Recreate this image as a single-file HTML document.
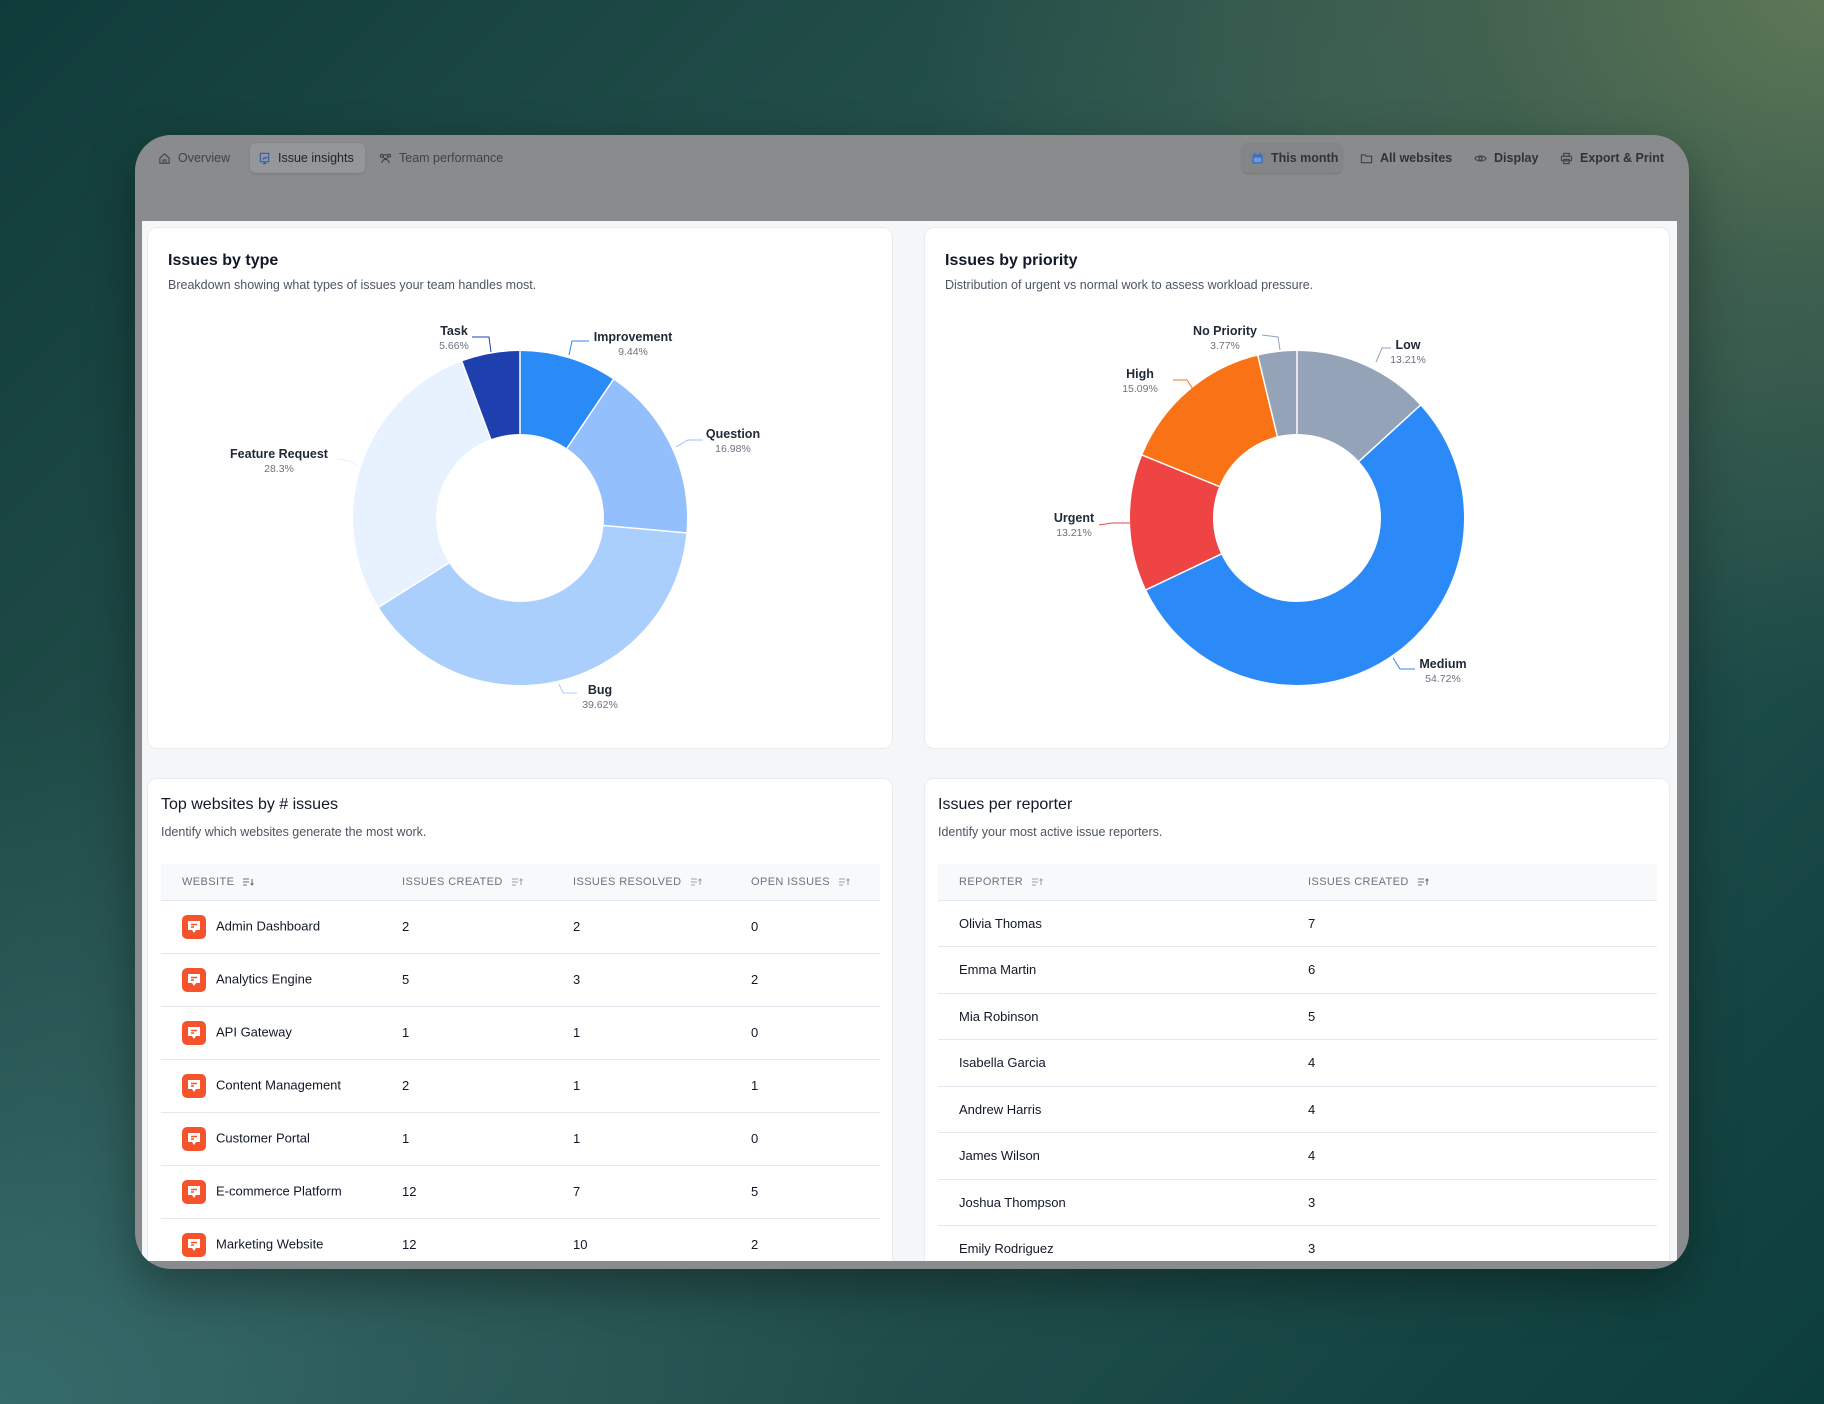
<!DOCTYPE html>
<html><head><meta charset="utf-8"><style>
*{margin:0;padding:0;box-sizing:border-box}
body{width:1824px;height:1404px;overflow:hidden;font-family:"Liberation Sans",sans-serif;position:relative;
background:radial-gradient(ellipse 900px 700px at 1824px 0px,#5d7756 0%,rgba(80,105,80,0.6) 40%,rgba(0,0,0,0) 100%),
radial-gradient(ellipse 900px 700px at 0px 1404px,#356b6b 0%,rgba(50,100,100,0.5) 50%,rgba(0,0,0,0) 100%),
linear-gradient(135deg,#0f3b3a 0%,#2b5650 45%,#1f4d4a 70%,#0c3e3c 100%);}
.win{position:absolute;left:135px;top:135px;width:1554px;height:1134px;border-radius:36px;background:#8a8b8c;overflow:hidden;box-shadow:0 20px 50px rgba(0,0,0,.35)}
.tab{position:absolute;top:16px;font-size:12.5px;color:#3f4348;display:flex;align-items:center;gap:7px;height:14px;line-height:14px}
.pill{position:absolute;top:8px;height:30px;border-radius:6px;background:#959698;box-shadow:0 1px 2px rgba(0,0,0,.15)}
.content{position:absolute;left:7px;top:86px;width:1535px;height:1040px;background:#f4f6f8;overflow:hidden}
.card{position:absolute;background:#fff;border-radius:10px;border:1px solid #e8ecf0}
.title{position:absolute;font-size:16px;font-weight:bold;color:#111827}
.sub{position:absolute;font-size:12.5px;color:#4b5563}
.lbl{position:absolute;text-align:center;transform:translateX(-50%);white-space:nowrap}
.lbl b{display:block;font-size:12.5px;color:#1f2937}
.lbl i{display:block;font-style:normal;font-size:10.5px;color:#6b7280;margin-top:2px}
table{position:absolute;border-collapse:collapse;font-size:13px;color:#111827}
th{background:#f7f9fb;font-weight:normal;font-size:11px;letter-spacing:.4px;color:#6b7280;text-align:left;height:36px;border-bottom:1px solid #e2e8f0}
td{border-bottom:1px solid #e2e8f0}
.ic{display:inline-block;width:24px;height:24px;background:#f4532c;border-radius:5px;vertical-align:middle;margin-right:10px;position:relative}
.srt{display:inline-block;margin-left:8px;vertical-align:middle}
</style></head><body>
<div class="win">
 <div class="pill" style="left:115px;width:115px"></div>
 <div class="pill" style="left:1107px;width:100px;background:#838587"></div>
 <div class="tab" style="left:23px"><svg width="13" height="13" viewBox="0 0 14 14" fill="none" stroke="#3f4348" stroke-width="1.2"><path d="M2 6.5L7 2l5 4.5V12H2z"/><path d="M5.5 12V8.5h3V12"/></svg>Overview</div>
 <div class="tab" style="left:123px;color:#1f2329"><svg width="13" height="13" viewBox="0 0 14 14" fill="none" stroke="#2d5fb0" stroke-width="1.2"><rect x="2.5" y="1.5" width="9" height="9"/><path d="M5 12.5h4M7 10.5v2M5 8l2-2 1 1 2-2"/></svg>Issue insights</div>
 <div class="tab" style="left:244px"><svg width="13" height="13" viewBox="0 0 14 14" fill="none" stroke="#3f4348" stroke-width="1.2"><circle cx="7" cy="5" r="2.2"/><circle cx="3" cy="4" r="1.5"/><circle cx="11" cy="4" r="1.5"/><path d="M3 12c0-2.5 2-4 4-4s4 1.5 4 4"/></svg>Team performance</div>
 <div class="tab" style="left:1116px;font-weight:bold;color:#2f3338"><svg width="13" height="13" viewBox="0 0 14 14"><rect x="1.5" y="2.5" width="11" height="10" rx="1.5" fill="#3b6fc4"/><rect x="3" y="6" width="8" height="5" fill="#6f98d8"/><path d="M4 1v3M10 1v3" stroke="#3b6fc4" stroke-width="1.4"/></svg>This month</div>
 <div class="tab" style="left:1225px;font-weight:bold;color:#2f3338"><svg width="13" height="13" viewBox="0 0 14 14" fill="none" stroke="#3f4348" stroke-width="1.2"><path d="M1.5 3h4l1.2 1.5h5.8v7h-11z"/></svg>All websites</div>
 <div class="tab" style="left:1339px;font-weight:bold;color:#2f3338"><svg width="13" height="13" viewBox="0 0 14 14" fill="none" stroke="#3f4348" stroke-width="1.2"><path d="M1 7c2-3.5 10-3.5 12 0-2 3.5-10 3.5-12 0z"/><circle cx="7" cy="7" r="1.8"/></svg>Display</div>
 <div class="tab" style="left:1425px;font-weight:bold;color:#2f3338"><svg width="13" height="13" viewBox="0 0 14 14" fill="none" stroke="#3f4348" stroke-width="1.2"><rect x="4" y="1.5" width="6" height="3"/><rect x="1.5" y="4.5" width="11" height="5" rx="1"/><rect x="4" y="8" width="6" height="4.5"/></svg>Export &amp; Print</div>

 <div class="content">
  <div class="card" style="left:5px;top:6px;width:746px;height:522px">
   <div class="title" style="left:20px;top:24px">Issues by type</div>
   <div class="sub" style="left:20px;top:50px">Breakdown showing what types of issues your team handles most.</div>
  </div>
  <div class="card" style="left:782px;top:6px;width:746px;height:522px">
   <div class="title" style="left:20px;top:24px">Issues by priority</div>
   <div class="sub" style="left:20px;top:50px">Distribution of urgent vs normal work to assess workload pressure.</div>
  </div>
  <svg style="position:absolute;left:-142px;top:-221px" width="1824" height="1000">
   <g fill="none" stroke-width="83">
    <circle cx="520" cy="518" r="125.5" transform="rotate(-90 520 518)" stroke="#2a8af6" stroke-dasharray="74.44 800" stroke-dashoffset="0"/>
    <circle cx="520" cy="518" r="125.5" transform="rotate(-90 520 518)" stroke="#93c0fd" stroke-dasharray="133.9 800" stroke-dashoffset="-74.44"/>
    <circle cx="520" cy="518" r="125.5" transform="rotate(-90 520 518)" stroke="#aacffd" stroke-dasharray="312.42 800" stroke-dashoffset="-208.34"/>
    <circle cx="520" cy="518" r="125.5" transform="rotate(-90 520 518)" stroke="#e8f2fe" stroke-dasharray="223.16 800" stroke-dashoffset="-520.76"/>
    <circle cx="520" cy="518" r="125.5" transform="rotate(-90 520 518)" stroke="#1e40af" stroke-dasharray="44.63 800" stroke-dashoffset="-743.91"/>
    <circle cx="1297" cy="518" r="125.5" transform="rotate(-90 1297 518)" stroke="#94a3b8" stroke-dasharray="104.17 800" stroke-dashoffset="0"/>
    <circle cx="1297" cy="518" r="125.5" transform="rotate(-90 1297 518)" stroke="#2b8af7" stroke-dasharray="431.49 800" stroke-dashoffset="-104.17"/>
    <circle cx="1297" cy="518" r="125.5" transform="rotate(-90 1297 518)" stroke="#ef4444" stroke-dasharray="104.17 800" stroke-dashoffset="-535.66"/>
    <circle cx="1297" cy="518" r="125.5" transform="rotate(-90 1297 518)" stroke="#f97316" stroke-dasharray="118.99 800" stroke-dashoffset="-639.83"/>
    <circle cx="1297" cy="518" r="125.5" transform="rotate(-90 1297 518)" stroke="#94a3b8" stroke-dasharray="29.73 800" stroke-dashoffset="-758.82"/>
   </g>
   <g stroke="#fff" stroke-width="1.5">
    <line x1="520" y1="434" x2="520" y2="350" transform="rotate(0 520 518)"/>
    <line x1="520" y1="434" x2="520" y2="350" transform="rotate(33.98 520 518)"/>
    <line x1="520" y1="434" x2="520" y2="350" transform="rotate(95.11 520 518)"/>
    <line x1="520" y1="434" x2="520" y2="350" transform="rotate(237.74 520 518)"/>
    <line x1="520" y1="434" x2="520" y2="350" transform="rotate(339.62 520 518)"/>
    <line x1="1297" y1="434" x2="1297" y2="350" transform="rotate(0 1297 518)"/>
    <line x1="1297" y1="434" x2="1297" y2="350" transform="rotate(47.56 1297 518)"/>
    <line x1="1297" y1="434" x2="1297" y2="350" transform="rotate(244.55 1297 518)"/>
    <line x1="1297" y1="434" x2="1297" y2="350" transform="rotate(292.1 1297 518)"/>
    <line x1="1297" y1="434" x2="1297" y2="350" transform="rotate(346.43 1297 518)"/>
   </g>
   <g fill="none" stroke-width="1">
    <polyline points="472,337 489,337 491,352" stroke="#1e40af"/>
    <polyline points="589,341 572,341 569,355" stroke="#2a8af6"/>
    <polyline points="703,440 688,440 676,447" stroke="#93c0fd"/>
    <polyline points="337,459 350,461 357,466" stroke="#e8f2fe"/>
    <polyline points="577,693 563,693 559,684" stroke="#aacffd"/>
    <polyline points="1262,335 1278,337 1280,350" stroke="#94a3b8"/>
    <polyline points="1391,348 1382,348 1376,362" stroke="#94a3b8"/>
    <polyline points="1173,380 1187,380 1194,391" stroke="#f97316"/>
    <polyline points="1099,525 1112,523 1130,523" stroke="#ef4444"/>
    <polyline points="1415,669 1400,669 1393,658" stroke="#2b8af7"/>
   </g>
  </svg>
  <div style="position:absolute;left:-142px;top:-221px">
   <div class="lbl" style="left:454px;top:324px"><b>Task</b><i>5.66%</i></div>
   <div class="lbl" style="left:633px;top:330px"><b>Improvement</b><i>9.44%</i></div>
   <div class="lbl" style="left:733px;top:427px"><b>Question</b><i>16.98%</i></div>
   <div class="lbl" style="left:279px;top:447px"><b>Feature Request</b><i>28.3%</i></div>
   <div class="lbl" style="left:600px;top:683px"><b>Bug</b><i>39.62%</i></div>
   <div class="lbl" style="left:1225px;top:324px"><b>No Priority</b><i>3.77%</i></div>
   <div class="lbl" style="left:1408px;top:338px"><b>Low</b><i>13.21%</i></div>
   <div class="lbl" style="left:1140px;top:367px"><b>High</b><i>15.09%</i></div>
   <div class="lbl" style="left:1074px;top:511px"><b>Urgent</b><i>13.21%</i></div>
   <div class="lbl" style="left:1443px;top:657px"><b>Medium</b><i>54.72%</i></div>
  </div>

  <div class="card" style="left:5px;top:557px;width:746px;height:520px">
   <div class="title" style="left:13px;top:17px;font-weight:normal;font-size:16px">Top websites by # issues</div>
   <div class="sub" style="left:13px;top:46px">Identify which websites generate the most work.</div>
   <table style="left:13px;top:85px;width:719px">
    <tr><th style="padding-left:21px;width:241px">WEBSITE<svg class="srt" width="12" height="10" viewBox="0 0 12 10" fill="none" stroke="#6b7280" stroke-width="1.1"><path d="M1 2h6M1 5h6M1 8h4M10 2v6M8.5 6.5L10 8l1.5-1.5"/></svg></th><th style="width:171px">ISSUES CREATED<svg class="srt" width="12" height="10" viewBox="0 0 12 10" fill="none" stroke="#9aa3ae" stroke-width="1.1"><path d="M1 2h6M1 5h6M1 8h4M10 8V2M8.5 3.5L10 2l1.5 1.5"/></svg></th><th style="width:178px">ISSUES RESOLVED<svg class="srt" width="12" height="10" viewBox="0 0 12 10" fill="none" stroke="#9aa3ae" stroke-width="1.1"><path d="M1 2h6M1 5h6M1 8h4M10 8V2M8.5 3.5L10 2l1.5 1.5"/></svg></th><th>OPEN ISSUES<svg class="srt" width="12" height="10" viewBox="0 0 12 10" fill="none" stroke="#9aa3ae" stroke-width="1.1"><path d="M1 2h6M1 5h6M1 8h4M10 8V2M8.5 3.5L10 2l1.5 1.5"/></svg></th></tr>
    <tr style="height:53px"><td style="padding-left:21px"><span class="ic"><svg width="24" height="24" viewBox="0 0 24 24"><path d="M6 6h12v9h-4l-2 3-2-3H6z" fill="#fff"/><path d="M9 9.5h6M9 12h3" stroke="#f4532c" stroke-width="1.5"/></svg></span>Admin Dashboard</td><td>2</td><td>2</td><td>0</td></tr>
    <tr style="height:53px"><td style="padding-left:21px"><span class="ic"><svg width="24" height="24" viewBox="0 0 24 24"><path d="M6 6h12v9h-4l-2 3-2-3H6z" fill="#fff"/><path d="M9 9.5h6M9 12h3" stroke="#f4532c" stroke-width="1.5"/></svg></span>Analytics Engine</td><td>5</td><td>3</td><td>2</td></tr>
    <tr style="height:53px"><td style="padding-left:21px"><span class="ic"><svg width="24" height="24" viewBox="0 0 24 24"><path d="M6 6h12v9h-4l-2 3-2-3H6z" fill="#fff"/><path d="M9 9.5h6M9 12h3" stroke="#f4532c" stroke-width="1.5"/></svg></span>API Gateway</td><td>1</td><td>1</td><td>0</td></tr>
    <tr style="height:53px"><td style="padding-left:21px"><span class="ic"><svg width="24" height="24" viewBox="0 0 24 24"><path d="M6 6h12v9h-4l-2 3-2-3H6z" fill="#fff"/><path d="M9 9.5h6M9 12h3" stroke="#f4532c" stroke-width="1.5"/></svg></span>Content Management</td><td>2</td><td>1</td><td>1</td></tr>
    <tr style="height:53px"><td style="padding-left:21px"><span class="ic"><svg width="24" height="24" viewBox="0 0 24 24"><path d="M6 6h12v9h-4l-2 3-2-3H6z" fill="#fff"/><path d="M9 9.5h6M9 12h3" stroke="#f4532c" stroke-width="1.5"/></svg></span>Customer Portal</td><td>1</td><td>1</td><td>0</td></tr>
    <tr style="height:53px"><td style="padding-left:21px"><span class="ic"><svg width="24" height="24" viewBox="0 0 24 24"><path d="M6 6h12v9h-4l-2 3-2-3H6z" fill="#fff"/><path d="M9 9.5h6M9 12h3" stroke="#f4532c" stroke-width="1.5"/></svg></span>E-commerce Platform</td><td>12</td><td>7</td><td>5</td></tr>
    <tr style="height:53px"><td style="padding-left:21px"><span class="ic"><svg width="24" height="24" viewBox="0 0 24 24"><path d="M6 6h12v9h-4l-2 3-2-3H6z" fill="#fff"/><path d="M9 9.5h6M9 12h3" stroke="#f4532c" stroke-width="1.5"/></svg></span>Marketing Website</td><td>12</td><td>10</td><td>2</td></tr>
   </table>
  </div>
  <div class="card" style="left:782px;top:557px;width:746px;height:520px">
   <div class="title" style="left:13px;top:17px;font-weight:normal;font-size:16px">Issues per reporter</div>
   <div class="sub" style="left:13px;top:46px">Identify your most active issue reporters.</div>
   <table style="left:13px;top:85px;width:719px">
    <tr><th style="padding-left:21px;width:370px">REPORTER<svg class="srt" width="12" height="10" viewBox="0 0 12 10" fill="none" stroke="#9aa3ae" stroke-width="1.1"><path d="M1 2h6M1 5h6M1 8h4M10 8V2M8.5 3.5L10 2l1.5 1.5"/></svg></th><th>ISSUES CREATED<svg class="srt" width="12" height="10" viewBox="0 0 12 10" fill="none" stroke="#6b7280" stroke-width="1.1"><path d="M1 2h6M1 5h6M1 8h4M10 8V2M8.5 3.5L10 2l1.5 1.5"/></svg></th></tr>
    <tr style="height:46.5px"><td style="padding-left:21px">Olivia Thomas</td><td>7</td></tr>
    <tr style="height:46.5px"><td style="padding-left:21px">Emma Martin</td><td>6</td></tr>
    <tr style="height:46.5px"><td style="padding-left:21px">Mia Robinson</td><td>5</td></tr>
    <tr style="height:46.5px"><td style="padding-left:21px">Isabella Garcia</td><td>4</td></tr>
    <tr style="height:46.5px"><td style="padding-left:21px">Andrew Harris</td><td>4</td></tr>
    <tr style="height:46.5px"><td style="padding-left:21px">James Wilson</td><td>4</td></tr>
    <tr style="height:46.5px"><td style="padding-left:21px">Joshua Thompson</td><td>3</td></tr>
    <tr style="height:46.5px"><td style="padding-left:21px">Emily Rodriguez</td><td>3</td></tr>
   </table>
  </div>
 </div>
</div>
</body></html>
